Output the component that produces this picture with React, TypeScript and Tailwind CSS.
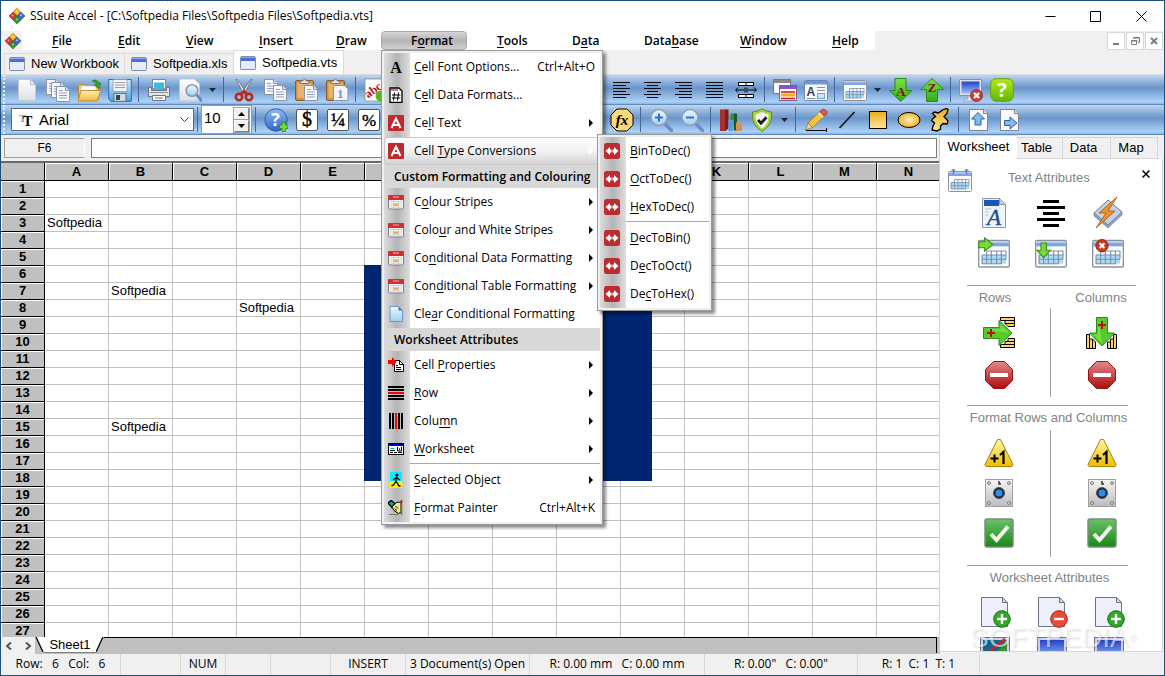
import type { ReactNode } from "react";

const UI = "font-['Open_Sans',sans-serif]";
const ARIAL = "font-['Liberation_Sans',sans-serif]";

/* ---------- helpers ---------- */

function Mnemonic({ text }: { text: string }) {
  const at = text.indexOf("&");
  if (at < 0) return <>{text}</>;
  return (
    <>
      {text.slice(0, at)}
      <span className="underline underline-offset-2">{text[at + 1]}</span>
      {text.slice(at + 2)}
    </>
  );
}

function Icon({ size = 24, box = 24, children }: { size?: number; box?: number; children: ReactNode }) {
  return (
    <svg width={size} height={size} viewBox={`0 0 ${box} ${box}`} fill="none" className="shrink-0" aria-hidden="true">
      {children}
    </svg>
  );
}

function Gradients() {
  const stops: [string, string, string][] = [
    ["gPage", "#ffffff", "#dcdfe6"],
    ["gBlue", "#d5e4fb", "#6f9be0"],
    ["gGold", "#e9ae18", "#fde6a0"],
    ["gYellow", "#fff6a8", "#f2bc00"],
    ["gGreen", "#7fe04a", "#2fae12"],
    ["gLime", "#b5e61d", "#5fb800"],
    ["gRed", "#e08a8c", "#b00c0c"],
    ["gFolder", "#fff0b0", "#f2b544"],
    ["gSky", "#cdeeff", "#4aa3dd"],
    ["gScreen", "#2342c9", "#9dbcf7"],
    ["gSteel", "#f6f6f6", "#bcbcbc"],
    ["gCheck", "#6cc06a", "#168a12"],
    ["gBall", "#8db9f5", "#2f66c5"],
    ["gGlass", "#eaf8ff", "#9fd0f0"],
  ];
  return (
    <svg width="0" height="0" className="absolute" aria-hidden="true">
      <defs>
        {stops.map(([id, a, b]) => (
          <linearGradient key={id} id={id} x1="0" y1="0" x2="0" y2="1">
            <stop offset="0" stopColor={a} />
            <stop offset="1" stopColor={b} />
          </linearGradient>
        ))}
        <radialGradient id="gOval">
          <stop offset="0" stopColor="#fff2c4" />
          <stop offset="1" stopColor="#eeb422" />
        </radialGradient>
      </defs>
    </svg>
  );
}

/* ---------- application icons ---------- */

function Logo() {
  return (
    <Icon size={16} box={16}>
      <path d="M8 0l4 4-4 4-4-4z" fill="#f0b51c" stroke="#a87c10" strokeWidth=".5" />
      <path d="M4 4l4 4-4 4-4-4z" fill="#cf3a2e" stroke="#84201a" strokeWidth=".5" />
      <path d="M12 4l4 4-4 4-4-4z" fill="#3b6cc0" stroke="#23447e" strokeWidth=".5" />
      <path d="M8 8l4 4-4 4-4-4z" fill="#35963f" stroke="#1c5f25" strokeWidth=".5" />
      <circle cx="8" cy="3.4" r="1" fill="#ffe9a0" />
      <circle cx="3.5" cy="7.4" r="1" fill="#f59b92" />
      <circle cx="12" cy="7.2" r="1" fill="#a6c4f4" />
      <circle cx="8" cy="11.4" r="1" fill="#8fd894" />
    </Icon>
  );
}

function WindowIcon() {
  return (
    <Icon size={16} box={16}>
      <rect x=".5" y="1.5" width="15" height="13" rx="1" fill="#e6ebf8" stroke="#7d8cab" />
      <rect x="1" y="2" width="14" height="4" fill="#4a6fd8" />
      <path d="M1 2.5h14" stroke="#8fa9f0" />
    </Icon>
  );
}

function NewDoc() {
  return (
    <Icon>
      <path d="M3.5 1.5h12l5 5v16h-17z" fill="url(#gPage)" stroke="#c4c8d0" />
      <path d="M15.5 1.5v5h5z" fill="#eceef2" stroke="#b8bcc6" />
    </Icon>
  );
}

function page(x: number, y: number, key?: string) {
  return (
    <g key={key} transform={`translate(${x} ${y})`}>
      <path d="M.5.5h9l4 4v11h-13z" fill="#f7f9fd" stroke="#8b93a5" />
      <path d="M9.500.5v4h4" stroke="#8b93a5" fill="#dfe5f0" />
      <path d="M3 4.500h4M3 7h8M3 9.500h8M3 12h8" stroke="#8f9fc4" />
    </g>
  );
}

const PagesIcon = () => <Icon>{[page(0, 1, "a"), page(5, 4, "b"), page(10, 8, "c")]}</Icon>;
const CopyIcon = () => <Icon>{[page(1, 1, "a"), page(10, 7, "b")]}</Icon>;

function FolderIcon() {
  return (
    <Icon>
      <path d="M1.500 22V7.500q0-1 1-1h6l2 2.500h11V22z" fill="#f3c766" stroke="#b98a2c" />
      <path d="M4 8h15v8H4z" fill="#fff" stroke="#b8c0cc" strokeWidth=".7" />
      <path d="M4 12.500h19.500L20.500 23H1z" fill="url(#gFolder)" stroke="#c0902e" />
      <path d="M15 3q5-3 7 2.500l2-1-2 6-5-3.500 2.500-.6Q18.500 3.500 15 3z" fill="#3aa514" stroke="#1d6b08" strokeWidth=".5" />
    </Icon>
  );
}

function SaveIcon() {
  return (
    <Icon>
      <path d="M.7 1.500h22.600v21.800H3L.7 21z" fill="url(#gSky)" stroke="#2f6f9e" />
      <rect x="5" y="1.500" width="14" height="12" fill="#f4f5f7" stroke="#8a9099" strokeWidth=".7" />
      <path d="M7 4.500h10M7 7h10M7 9.500h10" stroke="#9aa0a8" />
      <rect x="6" y="15.500" width="12" height="7.800" fill="#d6d9de" stroke="#5c6570" strokeWidth=".8" />
      <rect x="8" y="17" width="4" height="5" fill="#3c4248" />
    </Icon>
  );
}

function PrinterIcon() {
  return (
    <Icon>
      <path d="M5.500 1.500h13v9h-13z" fill="#fff" stroke="#7c8794" />
      <path d="M7 4.500h10v7H7z" fill="#3fb6dc" />
      <path d="M1.500 9.500h3v3h15v-3h3v9h-21z" fill="#e3e4e8" stroke="#6f7680" />
      <path d="M3 14.500h18" stroke="#8c929b" />
      <path d="M5.500 17.500h13v5h-13z" fill="#f8f8f8" stroke="#6f7680" />
      <path d="M8 20h8" stroke="#777" />
    </Icon>
  );
}

function PreviewIcon() {
  return (
    <Icon>
      <path d="M1.500 1h15l5 5v17h-20z" fill="url(#gPage)" stroke="#c2c6cf" />
      <path d="M19 17l4.500 5.500" stroke="#6d8cc8" strokeWidth="3.400" strokeLinecap="round" />
      <circle cx="14" cy="12.500" r="5.800" fill="url(#gGlass)" stroke="#8b98a8" strokeWidth="1.600" />
    </Icon>
  );
}

function ScissorsIcon() {
  return (
    <Icon>
      <path d="M4 1l2.300 1.500L14 15l-2.500 1z" fill="#f3f3f3" stroke="#5f6670" strokeWidth=".8" />
      <path d="M20 1l-2.300 1.500L10 15l2.500 1z" fill="#dcdfe3" stroke="#5f6670" strokeWidth=".8" />
      <circle cx="7" cy="19" r="3.200" stroke="#b82a16" strokeWidth="2.600" />
      <circle cx="17" cy="19" r="3.200" stroke="#b82a16" strokeWidth="2.600" />
      <path d="M9 16l3-3 3 3" stroke="#b82a16" strokeWidth="2.600" />
    </Icon>
  );
}

function PasteIcon({ one }: { one?: boolean }) {
  return (
    <Icon>
      <rect x="1.500" y="2.500" width="18" height="20" rx="1.500" fill="#cf9343" stroke="#8a5c1e" />
      <rect x="3.500" y="5" width="14" height="15" fill="#e6b46c" />
      <path d="M6 5.500V3h2.500Q10.500-.5 12.500 3H15v2.500z" fill="#e2e4e8" stroke="#6f7680" />
      {one ? (
        <>
          <path d="M8.500 7.500h11l3.500 3v12h-14.500z" fill="#f3f6fc" stroke="#8b93a5" />
          <text x="12" y="20" fontSize="13" fontFamily="Liberation Serif" fontWeight="bold" fill="#7c90c0">1</text>
        </>
      ) : (
        page(10, 7)
      )}
    </Icon>
  );
}

function SpellIcon() {
  return (
    <Icon>
      <rect x="1" y="1" width="22" height="22" fill="#fff" stroke="#888" strokeWidth=".8" />
      <text x="1" y="17" fontSize="12" fontWeight="bold" fontFamily="Liberation Serif" fill="#b01010" transform="rotate(-35 8 14)">abc</text>
      <circle cx="17" cy="18" r="5.500" fill="#58b818" />
    </Icon>
  );
}

function AlignIcon({ kind }: { kind: "left" | "center" | "right" | "full" }) {
  return (
    <Icon>
      {[5, 8, 11, 14, 17, 20].map((y, i) => {
        const short = kind !== "full" && i % 2 === 1;
        const x1 = short ? (kind === "left" ? 3 : kind === "center" ? 6 : 7) : 3;
        const x2 = short ? (kind === "left" ? 16 : kind === "center" ? 17 : 20) : 20;
        return <path key={y} d={`M${x1} ${y - 0.5}H${x2}`} stroke="#0a0a0a" />;
      })}
    </Icon>
  );
}

function MergeIcon() {
  return (
    <Icon>
      <rect x="4.500" y="4.500" width="15" height="3" fill="#fff" stroke="#000" />
      <rect x="4.500" y="16.500" width="15" height="3" fill="#fff" stroke="#000" />
      <path d="M12 4v4M12 16v4M11 9.500v5M13 9.500v5M2 12h8M14 12h8" stroke="#000" />
      <path d="M4 9.500L1.500 12 4 14.500M20 9.500l2.500 2.500-2.500 2.500" stroke="#000" />
    </Icon>
  );
}

function CascadeIcon() {
  return (
    <Icon>
      <rect x=".5" y="1.500" width="17" height="14" fill="#fff" stroke="#777" />
      <rect x="1" y="2" width="16" height="3" fill="#8a8a8a" />
      <rect x="6.500" y="7.500" width="17" height="15" fill="#fff" stroke="#7c5aa6" />
      <rect x="7" y="8" width="16" height="3" fill="#8a54c8" />
      <path d="M8 14h14M8 20.500h14" stroke="#c41818" strokeWidth="1.500" />
      <path d="M8 17h14" stroke="#f0b018" strokeWidth="3" />
    </Icon>
  );
}

function FormIcon() {
  return (
    <Icon>
      <rect x=".5" y="2.500" width="23" height="20" rx="1" fill="#f8fafd" stroke="#6f86ad" />
      <rect x="1" y="3" width="22" height="3.500" fill="#6f95e0" />
      <text x="2.500" y="18" fontSize="12" fontWeight="bold" fontFamily="Liberation Sans" fill="#3a3f48">A</text>
      <path d="M13 9.500h8M13 12.500h8M3 20.500h8" stroke="#888f9b" />
      <rect x="13.500" y="15.500" width="7" height="5" fill="#c7e4fb" stroke="#6ea5d8" />
    </Icon>
  );
}

function CalendarIcon({ size = 24, badge }: { size?: number; badge?: "right" | "down" | "x" | "rings" }) {
  return (
    <Icon size={size}>
      <rect x=".5" y="2.500" width="23" height="20" rx="1" fill="#fbfcfe" stroke="#8c929c" />
      <rect x="1" y="3" width="22" height="4" fill="#7fa4e6" />
      <rect x="1" y="3" width="22" height="1.500" fill="#b5ccf5" />
      <path d="M3 13.500h18v6.500H3z" fill="#a9dcf8" />
      <path d="M6.500 10.500H21v3H6.500z" fill="#fff" />
      <path d="M6.500 10.500H21M3 13.500h18M3 16.700h18M3 20h15M3 13.500V20M6.500 10.500V20M10 10.500V20M14 10.500V20M17.500 10.500V20M21 10.500v6.200" stroke="#7b8ca6" strokeWidth=".8" />
      {badge === "rings" && <path d="M5.500 0v5M18.500 0v5M3.500 1h4M16.500 1h4" stroke="#6b727e" strokeWidth="1.200" />}
      {badge === "right" && <path d="M.5 3.500H5V.6l6 5-6 5V8H.5z" fill="#7fd83a" stroke="#2f8f12" strokeWidth=".8" />}
      {badge === "down" && <path d="M4.500 4.500h4V10H11.500L6.500 15.500 1.500 10h3z" fill="#7fd83a" stroke="#2f8f12" strokeWidth=".8" />}
      {badge === "x" && (
        <>
          <circle cx="7.500" cy="6.500" r="4.600" fill="#cc3a18" stroke="#8e1f0a" strokeWidth=".7" />
          <path d="M5.700 4.700l3.600 3.600M9.300 4.700L5.700 8.300" stroke="#fff" strokeWidth="1.500" />
        </>
      )}
    </Icon>
  );
}

function SortIcon({ letter }: { letter: "A" | "Z" }) {
  return (
    <Icon>
      <path
        d={letter === "A" ? "M6 .5h11v12h6L11.700 23.500.5 12.500H6z" : "M6.500 23.500h11v-12h6L12 .5.7 11.500h5.800z"}
        fill="url(#gGreen)"
        stroke="#2a8c10"
      />
      <text x="12" y={letter === "A" ? 18 : 14} textAnchor="middle" fontSize="13" fontWeight="bold" fontFamily="Liberation Serif" fill="#8e0b0b">
        {letter}
      </text>
    </Icon>
  );
}

function MonitorIcon() {
  return (
    <Icon>
      <rect x=".5" y="1.500" width="22" height="16" rx="1" fill="#dfe1e6" stroke="#868c97" />
      <rect x="2.500" y="3.500" width="18" height="12" fill="url(#gScreen)" />
      <path d="M9 18h6v3h3v2H5v-2h4z" fill="#e7e8ec" stroke="#9096a0" strokeWidth=".7" />
      <circle cx="17.500" cy="17.500" r="6" fill="#d63a34" stroke="#9c1f1a" strokeWidth=".8" />
      <path d="M15 15l5 5M20 15l-5 5" stroke="#fff" strokeWidth="2.400" />
    </Icon>
  );
}

function HelpIcon() {
  return (
    <Icon>
      <rect x=".7" y=".7" width="22.600" height="22.600" rx="5.500" fill="url(#gLime)" stroke="#63a500" />
      <text x="12" y="19" textAnchor="middle" fontSize="20" fontWeight="bold" fontFamily="Open Sans" fill="#fff">?</text>
    </Icon>
  );
}

function HelpBall() {
  return (
    <Icon>
      <circle cx="12" cy="12" r="11.200" fill="url(#gBall)" stroke="#2f5fae" />
      <text x="11.500" y="18" textAnchor="middle" fontSize="18" fontWeight="bold" fontFamily="Open Sans" fill="#fff">?</text>
      <path d="M18 14.500h3.500V17H24v3.500h-2.500V23.500H18v-3h-2.500V17H18z" fill="#7ad63a" stroke="#2c8a12" strokeWidth=".8" />
    </Icon>
  );
}

function GlyphIcon({ text, size = 17 }: { text: string; size?: number }) {
  return (
    <Icon>
      <rect x="1.500" y="1.500" width="21" height="21" rx="1.500" fill="#fff" stroke="#555" />
      <text x="12" y="18" textAnchor="middle" fontSize={size} fontFamily="Liberation Serif" fill="#000" stroke="#000" strokeWidth=".4">
        {text}
      </text>
    </Icon>
  );
}

function FxIcon() {
  return (
    <Icon>
      <path d="M7 1h10l6 6v10l-6 6H7l-6-6V7z" fill="#fbd978" stroke="#000" />
      <text x="12" y="17" textAnchor="middle" fontSize="15" fontStyle="italic" fontWeight="bold" fontFamily="Liberation Serif" fill="#000">fx</text>
    </Icon>
  );
}

function ZoomIcon({ plus }: { plus?: boolean }) {
  return (
    <Icon>
      <path d="M16.500 16.500l6 6" stroke="#7089cb" strokeWidth="3.600" strokeLinecap="round" />
      <circle cx="10" cy="9.500" r="8" fill="url(#gGlass)" stroke="#93a0ae" strokeWidth="1.600" />
      <path d="M6 9.500h8" stroke="#3a6cc8" strokeWidth="2" />
      {plus && <path d="M10 5.500v8" stroke="#3a6cc8" strokeWidth="2" />}
    </Icon>
  );
}

function ChartIcon() {
  return (
    <Icon>
      <path d="M1 1.500h6v21.500H1z" fill="#a5322f" />
      <path d="M6 1.500h3.500v19L6 23z" fill="#7c1d1c" />
      <path d="M11.500 5.500h5v12h-5z" fill="#3d8a3e" />
      <path d="M15 5.500h3v17h-3z" fill="#1f5c28" />
      <path d="M9.500 12h5v11h-5z" fill="#5c9fe0" />
      <path d="M17 14.500h6V23h-6z" fill="#d9924e" />
    </Icon>
  );
}

function ShieldIcon() {
  return (
    <Icon>
      <path d="M12 .7q3.500 3 9.500 3.300Q23 17 12 23.500 1 17 2.500 4 8.500 3.700 12 .7z" fill="#a5d43a" stroke="#5d8f16" />
      <path d="M12 4q3 2 6.500 2.300Q19 16 12 20.500 5 16 5.500 6.300 9 6 12 4z" fill="#f3f5f4" />
      <path d="M8 12l3 3.200 5.500-6" stroke="#1c1c1c" strokeWidth="2.800" />
    </Icon>
  );
}

function PencilIcon() {
  return (
    <Icon>
      <path d="M2 22.500h20.500M22.500 20v4" stroke="#000" />
      <path d="M4 15L16 3.500l4.500 4.500L8.500 19.500z" fill="#f5c43a" stroke="#9c6b12" strokeWidth=".7" />
      <path d="M16 3.500l2.500-2.300q2 0 3.500 1.300t1 3.300L20.500 8z" fill="#e0574a" stroke="#8e2c22" strokeWidth=".6" />
      <path d="M4 15l4.500 4.500L1.500 22z" fill="#e8d3a8" stroke="#7c5a22" strokeWidth=".6" />
      <path d="M14.500 5l4.500 4.500" stroke="#dfe2e6" strokeWidth="1.500" />
    </Icon>
  );
}

const LineIcon = () => (
  <Icon>
    <path d="M4.500 20L19.500 4" stroke="#111" strokeWidth="1.600" />
  </Icon>
);
const RectIcon = () => (
  <Icon>
    <rect x="3.500" y="3.500" width="17" height="17" fill="url(#gGold)" stroke="#000" />
  </Icon>
);
const EllipseIcon = () => (
  <Icon>
    <ellipse cx="12" cy="12" rx="11" ry="7.500" fill="url(#gOval)" stroke="#000" />
  </Icon>
);
const BlobIcon = () => (
  <Icon>
    <path d="M4.500 5.500l2-1.500 4 1 4-3 4-1.500 1.500 1-1 4-3 3 4 4.500-1 3-4-.5-2.500 2.500v3l-3.500 2-5-1 .5-2.500 2-4.500-3-2.500 1-1.500 3-2.500z" fill="url(#gGold)" stroke="#000" strokeWidth="1.300" />
  </Icon>
);

function PageArrow({ up }: { up?: boolean }) {
  return (
    <Icon>
      <path d="M2.500 1.500h14l4 4v17h-18z" fill="#f8fafe" stroke="#7c8596" />
      <path d="M16.500 1.500v4h4" fill="#dde2ea" stroke="#7c8596" />
      {up ? (
        <path d="M11 4.500l6.500 6.500h-3.500v6h-6v-6H4.500z" fill="#86b8ee" stroke="#2f62a6" />
      ) : (
        <path d="M6.500 12.500H12V9l7 6-7 6v-3.500H6.500z" fill="#86b8ee" stroke="#2f62a6" />
      )}
    </Icon>
  );
}

/* ---------- menu icons ---------- */

const BoldA = () => (
  <Icon size={16} box={16}>
    <text x="8" y="14" textAnchor="middle" fontSize="16" fontWeight="bold" fontFamily="Liberation Serif" fill="#000">A</text>
  </Icon>
);
const HashDoc = () => (
  <Icon size={16} box={16}>
    <path d="M2 1h9l3 3v11.500H2z" fill="#fff" stroke="#000" strokeWidth="1.300" />
    <path d="M3 3h7" stroke="#e01010" strokeWidth="1.200" />
    <path d="M6.500 5.500l-1 8M10.500 5.500l-1 8M4 8h8.500M3.800 11h8.500" stroke="#000" />
  </Icon>
);
const RedA = () => (
  <Icon size={16} box={16}>
    <rect width="16" height="16" rx="1" fill="#bf2a2e" />
    <path d="M3.500 13L8 3.500 12.500 13M5.500 10h5" stroke="#fff" strokeWidth="2" />
  </Icon>
);
const RedArrows = () => (
  <Icon size={16} box={16}>
    <rect width="16" height="16" rx="2.500" fill="#bb2c30" />
    <path d="M1.500 8L6 4v2.500h4V4l4.500 4-4.500 4V9.500H6V12z" fill="#fff" />
    <path d="M8 4v8" stroke="#bb2c30" />
  </Icon>
);
const RedCalendar = () => (
  <Icon size={16} box={16}>
    <rect x=".5" y="1.500" width="15" height="13.500" rx="1" fill="#f3f3f5" stroke="#7f7f88" />
    <rect x="0" y="1" width="16" height="5" rx="1" fill="#cf2f33" />
    <path d="M5 3h6" stroke="#f4a9a6" />
    <path d="M2 7.500h12M2 10h12M2 13h12M5.500 7v7M10.500 7v7" stroke="#c5c8d2" strokeWidth=".8" />
    <rect x="6" y="9.500" width="4" height="2.500" fill="#f4b21b" />
  </Icon>
);
const BluePage = () => (
  <Icon size={16} box={16}>
    <path d="M2 .5h8.500l4 4v11H2z" fill="url(#gGlass)" stroke="#5d86c4" strokeWidth=".8" />
    <path d="M10.500.5v4h4z" fill="#3d74c6" />
  </Icon>
);
const PropsIcon = () => (
  <Icon size={16} box={16}>
    <path d="M6.500 3.500h5l4 4v7h-9z" fill="#fff" stroke="#000" />
    <path d="M11.500 3.500v4h4M8 8.500h2M8 10.500h5M8 12.500h5" stroke="#000" />
    <path d="M0 3h4V0l4.500 5L4 10V7H0z" fill="#f00" />
  </Icon>
);
const RowIcon = () => (
  <Icon size={16} box={16}>
    <path d="M0 2h16M0 5h16M0 11h16M0 14h16" stroke="#000" strokeWidth="2" />
    <path d="M0 8h16" stroke="#f00" strokeWidth="2" />
  </Icon>
);
const ColumnIcon = () => (
  <Icon size={16} box={16}>
    <path d="M2 0v16M5 0v16M11 0v16M14 0v16" stroke="#000" strokeWidth="2" />
    <path d="M8 0v16" stroke="#f00" strokeWidth="2" />
  </Icon>
);
const SheetIcon = () => (
  <Icon size={16} box={16}>
    <rect x=".5" y="2.500" width="15" height="11" fill="#fff" stroke="#000" />
    <path d="M1 4h14" stroke="#00c" strokeWidth="2" />
    <path d="M2.500 7.500h4" stroke="#0aa" />
    <path d="M2 9.500h5M2 11.500h3M6 11.500h3M10 11.500h4M9.500 6v4h4V6" stroke="#000" />
    <path d="M11.500 7v3" stroke="#f00" />
  </Icon>
);
const WalkIcon = () => (
  <Icon size={16} box={16}>
    <path d="M2 0h12v9H2z" fill="#00f0ff" />
    <path d="M2 9h12v7H2z" fill="#ffee00" />
    <circle cx="9" cy="3" r="1.500" fill="#000" />
    <path d="M8.500 4.500L8 9M8.500 5.500L5 8M8.500 5.500l3.500 2.500M8 9l3 5h1.500M8 9l-2 3.500-2.500 1.500" stroke="#000" strokeWidth="1.300" />
  </Icon>
);
const PainterIcon = () => (
  <Icon size={16} box={16}>
    <path d="M0 3L3 .5l4 3-3 4z" fill="#0aa6ac" stroke="#000" strokeWidth="1.400" />
    <path d="M4 7l4.500-4.500L13 2v10l-2.500 1.500L6 10.500z" fill="#f3f08a" stroke="#000" />
    <path d="M7.500 6l2.500 2.500M6.500 8.500l2.500 2" stroke="#000" />
    <path d="M13.500 1v14" stroke="#8a6a10" strokeWidth="1.500" />
    <path d="M13.500 0v3" stroke="#d01010" strokeWidth="1.500" />
    <path d="M1 14.500h9" stroke="#777" />
  </Icon>
);

/* ---------- side panel icons ---------- */

const FontPage = () => (
  <Icon size={32} box={32}>
    <path d="M4.500 1.500h17l6 6v23h-23z" fill="#f0f3f9" stroke="#8d97a8" />
    <path d="M6 3h15v6H6z" fill="#1a55b8" />
    <path d="M21.500 1.500v6h6z" fill="#c8d0de" stroke="#8d97a8" />
    <text x="16" y="28" textAnchor="middle" fontSize="23" fontStyle="italic" fontFamily="Liberation Serif" fill="#1f4f8f" stroke="#1f4f8f" strokeWidth=".4">A</text>
    <path d="M7 12h6M7 15h4M7 18h3" stroke="#b3bdcd" />
  </Icon>
);
const CenterLines = () => (
  <Icon size={32} box={32}>
    <path d="M8 4.500h16M2 10.500h28M8 16.500h16M2 22.500h28M8 28.500h16" stroke="#000" strokeWidth="3" />
  </Icon>
);
const FlashIcon = () => (
  <Icon size={32} box={32}>
    <path d="M2 16L16 3l14 12-14 13z" fill="#c3d1e6" stroke="#6c7c98" />
    <path d="M2 16l14 12 14-13v3L16 31 2 19z" fill="#8fa3c4" stroke="#6c7c98" strokeWidth=".6" />
    <path d="M25 0L7 16h7L4 31l19-17h-7z" fill="#f0922a" stroke="#a35408" strokeWidth=".8" />
  </Icon>
);
function InsertRows({ down }: { down?: boolean }) {
  return (
    <Icon size={34} box={34}>
      <g transform={down ? "matrix(0 1 1 0 0 0)" : undefined}>
        <path d="M18.500 1.500h14v9h-6.500l-3-3v-3h-4.500z" fill="#fbd36a" stroke="#000" />
        <path d="M22 4.500h10.500M23 7.500h9.500" stroke="#000" />
        <path d="M26 22.500h6.500v9h-14v-3h4.500v-3h3z" fill="#fbd36a" stroke="#000" />
        <path d="M24 25.500h8.500M22 28.500h10.500" stroke="#000" />
        <path d="M1.500 11.500H17V4.500L30 17 17 29.500v-7H1.500z" fill="#55cc2c" stroke="#2a8c10" />
        <path d="M3 13h15.500V8.500L27 17z" fill="#8fe85c" opacity=".6" />
        <path d="M5 17h8M9 13v8" stroke="#c00d0d" strokeWidth="2" />
      </g>
    </Icon>
  );
}
const StopIcon = () => (
  <Icon size={30} box={30}>
    <path d="M9.500 1.500h11l8 8v11l-8 8h-11l-8-8v-11z" fill="url(#gRed)" stroke="#961616" />
    <rect x="6" y="13" width="18" height="4" fill="#fff" />
  </Icon>
);
const PlusOne = () => (
  <Icon size={30} box={30}>
    <path d="M13.500 1.500h3L29 26.500q0 2-1.500 2h-25q-1.500 0-1.500-2z" fill="url(#gYellow)" stroke="#a8860c" />
    <path d="M6.500 20.500h8M10.500 16.500v8" stroke="#000" strokeWidth="2" />
    <path d="M16 17l3.500-3v12" stroke="#000" strokeWidth="2.200" />
  </Icon>
);
const PlateIcon = () => (
  <Icon size={30} box={30}>
    <rect x="1.500" y="1.500" width="27" height="27" fill="url(#gSteel)" stroke="#a0a0a0" />
    {[5, 25].map((x) => [5, 25].map((y) => <circle key={`${x}-${y}`} cx={x} cy={y} r="1.500" fill="#ddd" stroke="#666" strokeWidth=".8" />))}
    <circle cx="15" cy="15" r="5.500" fill="#1b2430" stroke="#555" />
    <circle cx="15" cy="15" r="3.500" fill="#2b8fe8" />
    <path d="M15 3v3h2" stroke="#333" strokeWidth="1.500" />
  </Icon>
);
const CheckIcon = () => (
  <Icon size={30} box={30}>
    <rect x="1" y="1" width="28" height="28" rx="2" fill="url(#gCheck)" stroke="#7d8a7d" strokeWidth="1.500" />
    <path d="M7 16l5.500 6L24 8.500" stroke="#f4f4f4" strokeWidth="4" />
  </Icon>
);
function SheetBadge({ minus }: { minus?: boolean }) {
  return (
    <Icon size={32} box={32}>
      <path d="M2.500 1.500h21l5 5v24h-26z" fill="#edf0f9" stroke="#6d7484" />
      <path d="M23.500 1.500v5h5z" fill="#d5dae6" stroke="#6d7484" />
      <circle cx="23" cy="23" r="8.300" fill={minus ? "#ea4a3a" : "#33a828"} stroke={minus ? "#a3221a" : "#1a6f12"} />
      <path d="M18 23h10" stroke="#fff" strokeWidth="2.400" />
      {!minus && <path d="M23 18v10" stroke="#fff" strokeWidth="2.400" />}
    </Icon>
  );
}
function ScreenIcon({ mixed }: { mixed?: boolean }) {
  return (
    <Icon size={32} box={32}>
      <rect x="1.500" y="1.500" width="29" height="24" fill="#cdd6ea" stroke="#68748c" />
      <rect x="4" y="4" width="24" height="19" fill={mixed ? "#12688f" : "url(#gScreen)"} />
      {mixed && <path d="M28 4v19H12z" fill="#3d8f3d" />}
      {mixed && <path d="M26 3L10 16" stroke="#d02020" strokeWidth="2.500" />}
    </Icon>
  );
}

/* ---------- menus ---------- */

type Entry = { label: string; icon: ReactNode; arrow?: boolean; keys?: string } | { header: string } | { rule: true };

const formatMenu: Entry[] = [
  { label: "&Cell Font Options...", icon: <BoldA />, keys: "Ctrl+Alt+O" },
  { label: "C&ell Data Formats...", icon: <HashDoc /> },
  { label: "Ce&ll Text", icon: <RedA />, arrow: true },
  { label: "Cell &Type Conversions", icon: <RedA />, arrow: true },
  { header: "Custom Formatting and Colouring" },
  { label: "C&olour Stripes", icon: <RedCalendar />, arrow: true },
  { label: "Colo&ur and White Stripes", icon: <RedCalendar />, arrow: true },
  { label: "Co&nditional Data Formatting", icon: <RedCalendar />, arrow: true },
  { label: "Con&ditional Table Formatting", icon: <RedCalendar />, arrow: true },
  { label: "Cle&ar Conditional Formatting", icon: <BluePage /> },
  { header: "Worksheet Attributes" },
  { label: "Cell &Properties", icon: <PropsIcon />, arrow: true },
  { label: "&Row", icon: <RowIcon />, arrow: true },
  { label: "Colu&mn", icon: <ColumnIcon />, arrow: true },
  { label: "&Worksheet", icon: <SheetIcon />, arrow: true },
  { rule: true },
  { label: "&Selected Object", icon: <WalkIcon />, arrow: true },
  { label: "&Format Painter", icon: <PainterIcon />, keys: "Ctrl+Alt+K" },
];

const conversions: Entry[] = [
  { label: "&BinToDec()", icon: <RedArrows /> },
  { label: "&OctToDec()", icon: <RedArrows /> },
  { label: "&HexToDec()", icon: <RedArrows /> },
  { rule: true },
  { label: "&DecToBin()", icon: <RedArrows /> },
  { label: "D&ecToOct()", icon: <RedArrows /> },
  { label: "De&cToHex()", icon: <RedArrows /> },
];

function Menu({ entries, active, children }: { entries: Entry[]; active?: string; children?: ReactNode }) {
  return (
    <div className="border border-[#9a9a9a] bg-[#f0f0f0] p-[2px] whitespace-nowrap shadow-[3px_3px_3px_rgba(0,0,0,0.45)]">
      <div className="bg-[linear-gradient(to_right,#dcdcdc_0px,#b4b4b4_13px,#dedede_26px,#ffffff_26px)]">
        {entries.map((entry, i) => {
          if ("header" in entry) {
            return (
              <div key={i} className="flex h-[23px] items-center bg-[#d8d8d8] pl-[10px] font-semibold">
                {entry.header}
              </div>
            );
          }
          if ("rule" in entry) {
            return (
              <div key={i} className="h-[3px] pl-[26px]">
                <hr className="border-[#a8a8a8]" />
              </div>
            );
          }
          const on = entry.label === active;
          return (
            <div key={i} className="relative">
              <button
                className={
                  on
                    ? "flex h-7 w-full items-center rounded-sm border border-[#c8c8c8] bg-[linear-gradient(#fdfdfd,#f2f2f2_50%,#d4d4d4)] text-left"
                    : "flex h-7 w-full items-center border border-transparent text-left"
                }
              >
                <span className="flex w-[29px] shrink-0 pl-[3px]">{entry.icon}</span>
                <span>
                  <Mnemonic text={entry.label} />
                </span>
                {entry.keys && <span className="ml-auto pr-1">{entry.keys}</span>}
                {entry.arrow && (
                  <svg width="4" height="8" viewBox="0 0 4 8" className="mr-[6px] ml-auto" aria-hidden="true">
                    <path d="M0 0l4 4-4 4z" fill={on ? "#fff" : "#000"} />
                  </svg>
                )}
              </button>
              {on && children}
            </div>
          );
        })}
      </div>
    </div>
  );
}

const menuBar = [
  { label: "&File", width: "w-[66px]" },
  { label: "&Edit", width: "w-[68px]" },
  { label: "&View", width: "w-[73px]" },
  { label: "&Insert", width: "w-[77px]" },
  { label: "&Draw", width: "w-[75px]" },
  { label: "F&ormat", width: "w-[86px]" },
  { label: "&Tools", width: "w-[75px]" },
  { label: "D&ata", width: "w-[72px]" },
  { label: "Data&base", width: "w-[96px]" },
  { label: "&Window", width: "w-[92px]" },
  { label: "&Help", width: "w-[73px]" },
];

function TitleBar() {
  return (
    <header className={`flex h-[30px] shrink-0 items-center bg-white pl-2 text-[12px] ${UI}`}>
      <Logo />
      <h1 className="ml-[5px]">SSuite Accel - [C:\Softpedia Files\Softpedia Files\Softpedia.vts]</h1>
      <div className="ml-auto flex">
        <button className="flex w-[45px] justify-center" aria-label="Minimize">
          <Icon size={11} box={11}><path d="M.5 5.500h10" stroke="#000" /></Icon>
        </button>
        <button className="flex w-[45px] justify-center" aria-label="Maximize">
          <Icon size={11} box={11}><path d="M.5.5h10v10H.5z" stroke="#000" /></Icon>
        </button>
        <button className="flex w-[46px] justify-center" aria-label="Close">
          <Icon size={11} box={11}><path d="M.5.5l10 10M10.500.5l-10 10" stroke="#000" /></Icon>
        </button>
      </div>
    </header>
  );
}

function MenuBar() {
  return (
    <nav className={`flex h-[19px] shrink-0 items-stretch text-[12px] leading-4 ${UI}`}>
      <div className="flex w-[21px] items-center justify-center pl-[2px]">
        <Logo />
      </div>
      <div className="flex bg-white">
        {menuBar.map(({ label, width }) =>
          label === "F&ormat" ? (
            <div key={label} className={`relative z-20 ${width}`}>
              <button className="flex h-full w-full items-center rounded-sm border border-[#a9a9a9] bg-[linear-gradient(#d6d6d6,#b4b4b4_50%,#cfcfcf)] pl-[29px] font-semibold">
                <Mnemonic text={label} />
              </button>
              <div className="absolute top-full left-0 w-[222px]">
                <Menu entries={formatMenu} active="Cell &Type Conversions">
                  <div className="absolute -top-[3px] left-[213px] z-30 w-[115px]">
                    <Menu entries={conversions} />
                  </div>
                </Menu>
              </div>
            </div>
          ) : (
            <button key={label} className={`flex items-center pl-[30px] font-semibold ${width}`}>
              <Mnemonic text={label} />
            </button>
          ),
        )}
      </div>
      <div className="ml-auto flex gap-[1px] pt-[1px] pr-[1px]">
        <button className="flex w-[18px] items-center justify-center border border-[#d8d8d8] bg-white" aria-label="Minimize document">
          <Icon size={10} box={10}><path d="M2 8h6" stroke="#6f7f90" strokeWidth="2" /></Icon>
        </button>
        <button className="flex w-[18px] items-center justify-center border border-[#d8d8d8] bg-white" aria-label="Restore document">
          <Icon size={10} box={10}><path d="M3.500 3V1.500h6v5H8M3 2h7M1 5h6.500M1.500 4.500h5v4h-5z" stroke="#6f7f90" /></Icon>
        </button>
        <button className="flex w-[18px] items-center justify-center border border-[#d8d8d8] bg-white" aria-label="Close document">
          <Icon size={10} box={10}><path d="M2 2l6 6M8 2L2 8" stroke="#6f7f90" strokeWidth="2" /></Icon>
        </button>
      </div>
    </nav>
  );
}

function DocumentTabs() {
  return (
    <div className={`flex h-[25px] shrink-0 items-end border-b border-[#dcdcdc] pl-[3px] text-[13px] leading-4 whitespace-nowrap ${ARIAL}`}>
      <button className="flex h-[21px] w-[121px] items-center gap-[6px] border border-b-0 border-[#dcdcdc] pl-1">
        <WindowIcon /> New Workbook
      </button>
      <button className="flex h-[21px] w-[108px] items-center gap-[6px] border-t border-[#dcdcdc] pl-[6px]">
        <WindowIcon /> Softpedia.xls
      </button>
      <button className="flex h-6 w-[111px] items-center gap-[6px] border border-b-0 border-[#dcdcdc] bg-white pl-[6px]">
        <WindowIcon /> Softpedia.vts
      </button>
    </div>
  );
}

/* ---------- toolbars ---------- */

function Tool({ name, children }: { name: string; children: ReactNode }) {
  return (
    <button title={name} className="flex w-[31px] shrink-0 items-center justify-center">
      {children}
    </button>
  );
}

const Sep = () => <span className="my-[2px] mr-1 ml-[3px] w-[1px] shrink-0 bg-[#44689c]" />;

const Caret = () => (
  <button className="flex w-[15px] shrink-0 items-center justify-center" aria-label="More">
    <svg width="7" height="4" viewBox="0 0 7 4" aria-hidden="true"><path d="M0 0h7L3.500 4z" fill="#1d2733" /></svg>
  </button>
);

function Toolbar({ children }: { children: ReactNode }) {
  return (
    <div className="flex h-[30px] shrink-0 items-stretch border-b border-[#5f8bc0] bg-[linear-gradient(#c0d6ef_0%,#8db0dc_25%,#6b95c9_45%,#86afdd_65%,#abd1f7_92%,#8db4e0_100%)]">
      <span className="mx-[2px] w-1 shrink-0 border-l-2 border-dotted border-[#e6f0fb]" />
      <span className="w-[2px] shrink-0" />
      {children}
    </div>
  );
}

function Toolbars() {
  return (
    <>
      <Toolbar>
        <Tool name="New"><NewDoc /></Tool>
        <Tool name="Templates"><PagesIcon /></Tool>
        <Tool name="Open"><FolderIcon /></Tool>
        <Tool name="Save"><SaveIcon /></Tool>
        <Sep />
        <Tool name="Print"><PrinterIcon /></Tool>
        <Tool name="Preview"><PreviewIcon /></Tool>
        <Caret />
        <Sep />
        <Tool name="Cut"><ScissorsIcon /></Tool>
        <Tool name="Copy"><CopyIcon /></Tool>
        <Tool name="Paste"><PasteIcon /></Tool>
        <Tool name="Paste values"><PasteIcon one /></Tool>
        <Sep />
        <Tool name="Spelling"><SpellIcon /></Tool>
        <span className="w-[215px] shrink-0" />
        <Tool name="Align left"><AlignIcon kind="left" /></Tool>
        <Tool name="Align centre"><AlignIcon kind="center" /></Tool>
        <Tool name="Align right"><AlignIcon kind="right" /></Tool>
        <Tool name="Justify"><AlignIcon kind="full" /></Tool>
        <Tool name="Merge cells"><MergeIcon /></Tool>
        <Sep />
        <Tool name="Cascade"><CascadeIcon /></Tool>
        <Tool name="Form"><FormIcon /></Tool>
        <Sep />
        <Tool name="Table"><CalendarIcon /></Tool>
        <Caret />
        <Tool name="Sort ascending"><SortIcon letter="A" /></Tool>
        <Tool name="Sort descending"><SortIcon letter="Z" /></Tool>
        <Sep />
        <Tool name="Close screen"><MonitorIcon /></Tool>
        <Tool name="Help"><HelpIcon /></Tool>
      </Toolbar>
      <Toolbar>
        <div className="relative my-[3px] flex w-[183px] shrink-0 items-center border border-[#5a6b80] bg-white">
          <svg width="14" height="14" viewBox="0 0 14 14" className="ml-[7px]" aria-hidden="true">
            <text x="0" y="9" fontSize="11" fontWeight="bold" fontFamily="Liberation Serif" fill="#999">T</text>
            <text x="4" y="13" fontSize="14" fontWeight="bold" fontFamily="Liberation Serif" fill="#000">T</text>
          </svg>
          <select aria-label="Font" className={`h-full flex-1 appearance-none bg-transparent pl-[6px] text-[15px] leading-5 ${ARIAL}`}>
            <option>Arial</option>
          </select>
          <svg width="9" height="6" viewBox="0 0 9 6" className="pointer-events-none absolute right-1" aria-hidden="true">
            <path d="M.5.5l4 4 4-4" fill="none" stroke="#444" />
          </svg>
        </div>
        <span className="mx-[3px] my-[2px] w-[1px] shrink-0 bg-[#44689c]" />
        <div className="flex w-[51px] shrink-0 items-center border border-[#9a9a9a] bg-white">
          <input aria-label="Font size" defaultValue="10" className={`h-full w-8 pb-[5px] pl-[2px] text-[15px] ${ARIAL}`} />
          <div className="flex w-[15px] flex-col">
            {["M0 4h7L3.500 0z", "M0 0h7L3.500 4z"].map((d, i) => (
              <button
                key={d}
                aria-label={i ? "Smaller" : "Larger"}
                className="flex h-3 items-center justify-center border border-t-white border-r-[#808080] border-b-[#808080] border-l-white bg-[#f0f0f0] outline outline-[#a0a0a0]"
              >
                <svg width="7" height="4" viewBox="0 0 7 4" aria-hidden="true"><path d={d} fill="#000" /></svg>
              </button>
            ))}
          </div>
        </div>
        <Sep />
        <Tool name="Function help"><HelpBall /></Tool>
        <Tool name="Currency"><GlyphIcon text="$" size={20} /></Tool>
        <Tool name="Fraction"><GlyphIcon text="¼" size={19} /></Tool>
        <Tool name="Percent"><GlyphIcon text="%" size={17} /></Tool>
        <span className="w-[222px] shrink-0" />
        <Tool name="Function"><FxIcon /></Tool>
        <Sep />
        <Tool name="Zoom in"><ZoomIcon plus /></Tool>
        <Tool name="Zoom out"><ZoomIcon /></Tool>
        <Sep />
        <Tool name="Chart"><ChartIcon /></Tool>
        <Tool name="Protect"><ShieldIcon /></Tool>
        <Caret />
        <Sep />
        <Tool name="Freehand"><PencilIcon /></Tool>
        <Tool name="Line"><LineIcon /></Tool>
        <Tool name="Rectangle"><RectIcon /></Tool>
        <Tool name="Ellipse"><EllipseIcon /></Tool>
        <Tool name="Polygon"><BlobIcon /></Tool>
        <Sep />
        <Tool name="Bring up"><PageArrow up /></Tool>
        <Tool name="Send right"><PageArrow /></Tool>
      </Toolbar>
    </>
  );
}

/* ---------- sheet ---------- */

const columns = "ABCDEFGHIJKLMNOPQRSTUVWXYZ".split("");
const rows = Array.from({ length: 60 }, (_, i) => i + 1);
const cells: Record<string, string> = { A3: "Softpedia", B7: "Softpedia", D8: "Softpedia", B15: "Softpedia" };

function Sheet() {
  return (
    <div className="relative min-h-0 flex-1 overflow-hidden bg-white">
      <table className={`w-[1708px] table-fixed border-separate border-spacing-0 text-[13px] leading-4 ${ARIAL}`}>
        <colgroup>
          <col className="w-[44px]" />
          {columns.map((c) => <col key={c} className="w-16" />)}
        </colgroup>
        <thead>
          <tr className="h-[18px]">
            <th className="border-r border-b border-black bg-[#c0c0c0] p-0" />
            {columns.map((c) => (
              <th key={c} className="border-r border-b border-black bg-[#c0c0c0] p-0 shadow-[inset_1px_1px_0_#fff]">{c}</th>
            ))}
          </tr>
        </thead>
        <tbody>
          {rows.map((r) => (
            <tr key={r} className="h-[17px]">
              <th className="border-r border-b border-black bg-[#c0c0c0] p-0 shadow-[inset_1px_1px_0_#fff]">{r}</th>
              {columns.map((c) => (
                <td key={c} className="border-r border-b border-[#c0c0c0] p-0 pl-[2px]">{cells[c + r]}</td>
              ))}
            </tr>
          ))}
        </tbody>
      </table>
      <div className="absolute top-[102px] left-[363px] h-[216px] w-[288px] bg-[#002672]" />
    </div>
  );
}

function SheetTabs() {
  return (
    <div className={`flex h-[17px] shrink-0 bg-[#c0c0c0] text-[13px] leading-4 ${ARIAL}`}>
      <div className="flex w-[34px] items-center gap-[11px] bg-[#f0f0f0] pl-1">
        <button aria-label="Previous sheet"><Icon size={8} box={8}><path d="M6 .5L2 4l4 3.500" stroke="#555" strokeWidth="2" /></Icon></button>
        <button aria-label="Next sheet"><Icon size={8} box={8}><path d="M2 .5L6 4 2 7.500" stroke="#555" strokeWidth="2" /></Icon></button>
      </div>
      <svg width="9" height="16" viewBox="0 0 9 16" aria-hidden="true">
        <path d="M1 0h8v15H8z" fill="#fff" />
        <path d="M1 0l7 15" stroke="#000" strokeWidth="1.300" />
      </svg>
      <button className="h-4 w-[52px] border-b border-[#808080] bg-white">Sheet1</button>
      <svg width="8" height="16" viewBox="0 0 8 16" aria-hidden="true">
        <path d="M0 0h7L0 15z" fill="#fff" />
        <path d="M7 0L0 15" stroke="#000" strokeWidth="1.300" />
      </svg>
      <div className="mr-[2px] h-4 flex-1 border-t border-r border-black" />
    </div>
  );
}

function Workbook() {
  return (
    <main className="flex min-w-0 flex-1 flex-col">
      <div className={`flex h-[28px] shrink-0 gap-[6px] border-b-2 border-[#696969] py-[3px] pr-[2px] pl-[3px] text-[12px] ${ARIAL}`}>
        <div className="flex w-[81px] shrink-0 items-center justify-center border border-t-[#a0a0a0] border-r-white border-b-[#a0a0a0] border-l-[#a0a0a0]">F6</div>
        <input aria-label="Formula" className="min-w-0 flex-1 border border-[#7a7a7a] bg-white px-1" />
      </div>
      <Sheet />
      <SheetTabs />
    </main>
  );
}

/* ---------- side panel ---------- */

function Trio({ children }: { children: ReactNode }) {
  return <div className="grid h-10 w-[171px] grid-cols-3 items-center justify-items-center">{children}</div>;
}

function PanelButton({ name, children }: { name: string; children: ReactNode }) {
  return <button title={name} className="flex items-center justify-center">{children}</button>;
}

function Stack({ children }: { children: ReactNode }) {
  return <div className="flex w-[102px] flex-col items-center gap-[10px]">{children}</div>;
}

function SidePanel() {
  return (
    <aside className={`flex w-[225px] shrink-0 flex-col overflow-hidden border-l border-[#d0d0d0] pr-[1px] pb-[2px] text-[13px] leading-4 ${ARIAL}`}>
      <div className="flex h-6 shrink-0 items-end" role="tablist">
        <button className="h-6 w-[77px] border-t border-[#dcdcdc] bg-white pb-[2px]">Worksheet</button>
        <button className="h-[22px] w-[46px] border border-l-0 border-[#d6d6d6] pr-[6px]">Table</button>
        <button className="h-[22px] w-[48px] border border-l-0 border-[#d6d6d6] pr-[6px]">Data</button>
        <button className="h-[22px] w-[47px] border border-l-0 border-[#d6d6d6] pr-[6px]">Map</button>
      </div>
      <div className="relative flex min-h-0 flex-1 flex-col overflow-hidden border-r border-b border-[#d6d6d6] bg-white text-[#838383]">
        <div className="flex h-[34px] shrink-0 items-center pl-2">
          <div className="pt-[10px]"><CalendarIcon badge="rings" /></div>
          <span className="ml-[36px] pt-[4px]">Text Attributes</span>
          <button className="mr-[12px] mb-[4px] ml-auto" aria-label="Close panel">
            <Icon size={8} box={8}><path d="M.5.5l7 7M7.500.5l-7 7" stroke="#000" strokeWidth="1.500" /></Icon>
          </button>
        </div>
        <div className="shrink-0 pl-[25px]">
          <Trio>
            <PanelButton name="Font"><FontPage /></PanelButton>
            <PanelButton name="Centre"><CenterLines /></PanelButton>
            <PanelButton name="Clear"><FlashIcon /></PanelButton>
          </Trio>
          <Trio>
            <PanelButton name="Insert right"><CalendarIcon size={32} badge="right" /></PanelButton>
            <PanelButton name="Insert down"><CalendarIcon size={32} badge="down" /></PanelButton>
            <PanelButton name="Delete"><CalendarIcon size={32} badge="x" /></PanelButton>
          </Trio>
        </div>
        <hr className="mt-[12px] ml-[27px] w-[169px] border-[#a0a0a0]" />
        <div className="mt-1 flex shrink-0 pl-1 text-center">
          <span className="w-[102px]">Rows</span>
          <span className="w-[110px]">Columns</span>
        </div>
        <div className="mt-[2px] flex h-[89px] shrink-0 pl-2">
          <div className="pt-2"><Stack><InsertRows /><StopIcon /></Stack></div>
          <span className="w-[1px] bg-[#a0a0a0]" />
          <div className="pt-2"><Stack><InsertRows down /><StopIcon /></Stack></div>
        </div>
        <hr className="mt-2 ml-[27px] w-[161px] border-[#a0a0a0]" />
        <div className="mt-1 w-[217px] shrink-0 text-center">Format Rows and Columns</div>
        <div className="mt-1 flex h-[127px] shrink-0 pl-2">
          <div className="pt-2"><Stack><PlusOne /><PlateIcon /><CheckIcon /></Stack></div>
          <span className="w-[1px] bg-[#a0a0a0]" />
          <div className="pt-2"><Stack><PlusOne /><PlateIcon /><CheckIcon /></Stack></div>
        </div>
        <hr className="mt-2 ml-[27px] w-[161px] border-[#a0a0a0]" />
        <div className="mt-1 w-[219px] shrink-0 text-center">Worksheet Attributes</div>
        <div className="mt-[6px] shrink-0 pl-[26px]">
          <Trio>
            <PanelButton name="Add sheet"><SheetBadge /></PanelButton>
            <PanelButton name="Remove sheet"><SheetBadge minus /></PanelButton>
            <PanelButton name="Copy sheet"><SheetBadge /></PanelButton>
          </Trio>
          <Trio>
            <PanelButton name="Background"><ScreenIcon mixed /></PanelButton>
            <PanelButton name="Screen"><ScreenIcon /></PanelButton>
            <PanelButton name="Full screen"><ScreenIcon /></PanelButton>
          </Trio>
        </div>
        <span className="pointer-events-none absolute bottom-[1px] left-[30px] text-[28px] leading-6 text-white/60 [text-shadow:1px_1px_2px_rgba(0,0,0,0.15)]">
          SOFTPEDIA<sup className="text-[10px]">®</sup>
        </span>
      </div>
    </aside>
  );
}

function StatusBar() {
  return (
    <footer className={`flex h-[21px] shrink-0 items-stretch text-[12px] leading-5 whitespace-pre ${UI} *:border-r *:border-[#d7d7d7] *:text-center`}>
      <span className="w-[120px]">Row:   6   Col:   6</span>
      <span className="w-[60px]" />
      <span className="w-[45px]">NUM</span>
      <span className="w-[45px]" />
      <span className="w-[60px]" />
      <span className="w-[75px]">INSERT</span>
      <span className="w-[124px]">3 Document(s) Open</span>
      <span className="w-[175px]">R: 0.00 mm   C: 0.00 mm</span>
      <span className="w-[153px]">R: 0.00"   C: 0.00"</span>
      <span className="w-[122px]">R: 1  C: 1  T: 1</span>
    </footer>
  );
}

export default function App() {
  return (
    <div className="flex h-screen min-h-[400px] w-full flex-col overflow-hidden border border-[#1f4e79] bg-[#f0f0f0] text-black">
      <Gradients />
      <TitleBar />
      <MenuBar />
      <DocumentTabs />
      <Toolbars />
      <div className="flex min-h-0 flex-1">
        <Workbook />
        <SidePanel />
      </div>
      <StatusBar />
    </div>
  );
}
